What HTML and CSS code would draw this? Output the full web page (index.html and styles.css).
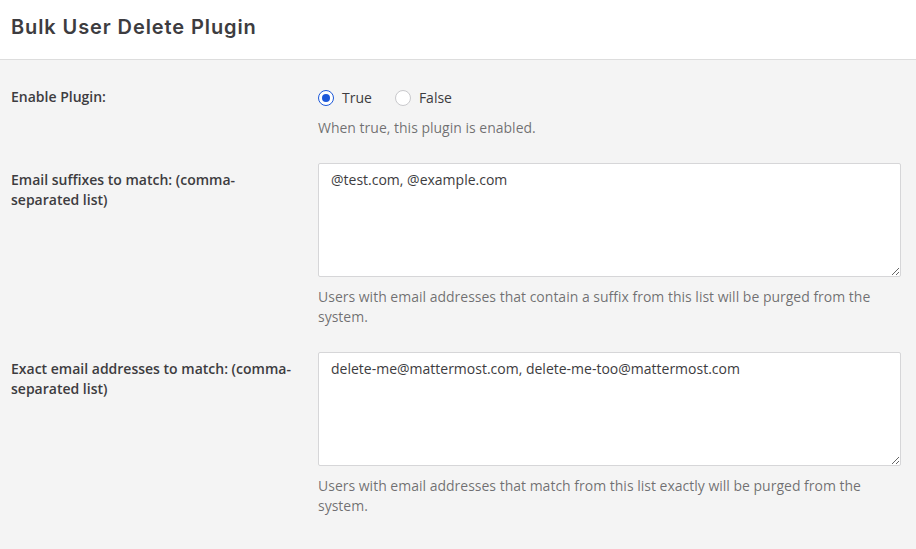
FILE: index.html
```html
<!DOCTYPE html>
<html>
<head>
<meta charset="utf-8">
<link rel="stylesheet" href="styles.css">
</head>
<body>
<div class="header"><h1 class="title">Bulk User Delete Plugin</h1></div>
<div class="content">
  <div class="form-group">
    <div class="label">Enable Plugin:</div>
    <div class="field">
      <div class="radios">
        <label class="radio"><span class="dot checked"></span>True</label>
        <label class="radio"><span class="dot"></span>False</label>
      </div>
      <div class="help first">When true, this plugin is enabled.</div>
    </div>
  </div>
  <div class="form-group">
    <div class="label">Email suffixes to match: (comma-separated list)</div>
    <div class="field">
      <textarea class="input">@test.com, @example.com</textarea>
      <div class="help">Users with email addresses that contain a suffix from this list will be purged from the system.</div>
    </div>
  </div>
  <div class="form-group">
    <div class="label">Exact email addresses to match: (comma-separated list)</div>
    <div class="field">
      <textarea class="input">delete-me@mattermost.com, delete-me-too@mattermost.com</textarea>
      <div class="help">Users with email addresses that match from this list exactly will be purged from the system.</div>
    </div>
  </div>
</div>
</body>
</html>
```
FILE: styles.css
```css
* { box-sizing: border-box; }
html, body { margin: 0; padding: 0; }
body {
  background: #f4f4f4;
  font-family: "Open Sans", "Noto Sans", sans-serif;
  font-size: 14px;
  line-height: 20px;
  color: #3d3c40;
  height: 549px;
  overflow: hidden;
}
.header {
  background: #fff;
  height: 60px;
  border-bottom: 1px solid #dddddd;
  padding: 0 11px;
  display: flex;
  align-items: center;
}
.title {
  margin: 0;
  font-family: "Inter", "Lato", sans-serif;
  font-weight: 600;
  font-size: 20px;
  line-height: 28px;
  color: #3d3c40;
  letter-spacing: 0.9px;
  padding-bottom: 5px;
}
.content {
  padding: 20px 15px 0 11px;
}
.form-group {
  display: grid;
  grid-template-columns: 292px 1fr;
  column-gap: 15px;
  margin-bottom: 15px;
}
.label {
  font-weight: 600;
  padding-top: 7px;
  padding-right: 4px;
}
.radios {
  display: flex;
  gap: 23px;
  padding-top: 8px;
}
.radio {
  display: flex;
  align-items: center;
  gap: 8px;
  color: #3d3c40;
}
.dot {
  width: 16px;
  height: 16px;
  border-radius: 50%;
  border: 1px solid #c9c9cc;
  background: #fff;
  display: inline-flex;
  align-items: center;
  justify-content: center;
}
.dot.checked {
  border: 1.5px solid #1c58d9;
}
.dot.checked::after {
  content: "";
  width: 8px;
  height: 8px;
  border-radius: 50%;
  background: #1c58d9;
}
.help {
  color: rgba(61, 60, 64, 0.72);
  margin-top: 10px;
  margin-bottom: 10px;
}
.help.first { margin-top: 10px; }
.input {
  display: block;
  width: 100%;
  height: 114px;
  margin: 0;
  border: 1px solid #d6d6d8;
  border-radius: 2px;
  background: #fff;
  padding: 6px 12px;
  font-family: "Open Sans", "Noto Sans", sans-serif;
  font-size: 14px;
  line-height: 20px;
  color: #3d3c40;
  resize: vertical;
  outline: none;
}
```
